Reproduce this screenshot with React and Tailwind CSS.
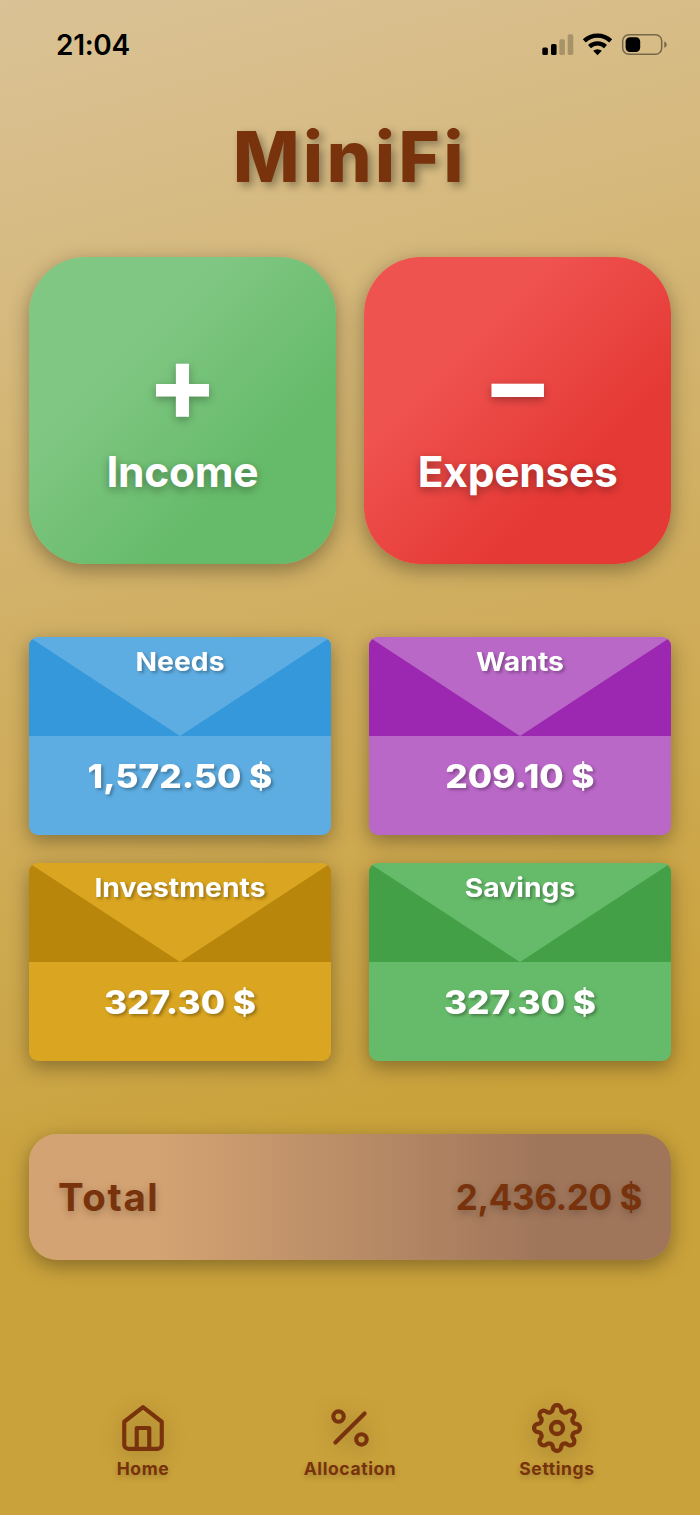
import React from 'react';
import { FiHome, FiPercent } from 'react-icons/fi';

const envelopes = [
  { name: 'Needs', amount: '1,572.50 $', body: 'bg-[#5dade2]', sides: 'bg-[#3498db]' },
  { name: 'Wants', amount: '209.10 $', body: 'bg-[#ba68c8]', sides: 'bg-[#9c27b0]' },
  { name: 'Investments', amount: '327.30 $', body: 'bg-[#daa520]', sides: 'bg-[#b8860b]' },
  { name: 'Savings', amount: '327.30 $', body: 'bg-[#66bb6a]', sides: 'bg-[#43a047]' },
];

// Rounded cog with eight lobes
const CogIcon = ({ className }) => (
  <svg className={className} viewBox="-25 -25 50 50" fill="none" stroke="currentColor" strokeWidth="4.3" strokeLinejoin="round">
    <circle r="6" />
    <path d="M-4.19-19.02A4.2 4.2 0 0 1 4.19-19.02A3.77 3.77 0 0 0 10.49-16.41A4.2 4.2 0 0 1 16.41-10.49A3.77 3.77 0 0 0 19.02-4.19A4.2 4.2 0 0 1 19.02 4.19A3.77 3.77 0 0 0 16.41 10.49A4.2 4.2 0 0 1 10.49 16.41A3.77 3.77 0 0 0 4.19 19.02A4.2 4.2 0 0 1-4.19 19.02A3.77 3.77 0 0 0-10.49 16.41A4.2 4.2 0 0 1-16.41 10.49A3.77 3.77 0 0 0-19.02 4.19A4.2 4.2 0 0 1-19.02-4.19A3.77 3.77 0 0 0-16.41-10.49A4.2 4.2 0 0 1-10.49-16.41A3.77 3.77 0 0 0-4.19-19.02z" />
  </svg>
);

const tabs = [
  { name: 'Home', icon: FiHome },
  { name: 'Allocation', icon: FiPercent },
  { name: 'Settings', icon: CogIcon },
];

const StatusBar = () => (
  <div className="flex h-[89px] items-center justify-between pl-[56px] pr-[33px] text-black">
    <span className="text-[28px] leading-none font-semibold tracking-[-0.3px]">21:04</span>
    <svg width="126" height="24" viewBox="0 0 126 24" fill="none">
      {/* signal */}
      <rect x="1.3" y="14.5" width="5.6" height="7.5" rx="1.6" fill="#000" />
      <rect x="10" y="11" width="5.6" height="11" rx="1.6" fill="#000" />
      <rect x="18.3" y="6.3" width="5.6" height="15.7" rx="1.6" fill="#000" fillOpacity="0.22" />
      <rect x="26.7" y="1.3" width="5.6" height="20.7" rx="1.6" fill="#000" fillOpacity="0.22" />
      {/* wifi */}
      <path d="M43.3 7.9a19 19 0 0 1 26.4 0" stroke="#000" strokeWidth="4.3" />
      <path d="M48.5 13.6a11.8 11.8 0 0 1 16 0" stroke="#000" strokeWidth="4.3" />
      <path d="M56.5 22.2l-4.3-4.4a6.4 6.4 0 0 1 8.6 0z" fill="#000" />
      {/* battery */}
      <rect x="81.7" y="1.7" width="39" height="19.6" rx="6.3" stroke="#000" strokeOpacity="0.45" strokeWidth="1.5" />
      <rect x="84.6" y="4.3" width="14.6" height="14.6" rx="4.3" fill="#000" />
      <path d="M123.3 8.4c1.5.6 2.4 1.8 2.4 3.2s-.9 2.6-2.4 3.2z" fill="#000" fillOpacity="0.45" />
    </svg>
  </div>
);

const ActionButton = ({ sign, label, colors }) => (
  <button
    className={`flex h-[306.5px] flex-col items-center rounded-[57px] pt-[79px] text-white shadow-[0_6px_20px_rgba(0,0,0,0.34)] ${colors}`}
  >
    <span className="text-[106px] leading-[94px] font-bold [text-shadow:0_3px_8px_rgba(0,0,0,0.3)]">{sign}</span>
    <span className="mt-[17px] text-[42.5px] leading-[50px] font-bold tracking-[-0.3px] [text-shadow:0_3px_8px_rgba(0,0,0,0.35)]">
      {label}
    </span>
  </button>
);

const Envelope = ({ name, amount, body, sides }) => (
  <div className={`h-[198px] overflow-hidden rounded-[9px] text-white shadow-[0_6px_20px_rgba(0,0,0,0.34)] ${body}`}>
    <div className="grid h-[99px]">
      {/* side folds, the flap shows through between them */}
      <div className={`col-start-1 row-start-1 [clip-path:polygon(0_0,50%_100%,100%_0,100%_100%,0_100%)] ${sides}`} />
      <div className="col-start-1 row-start-1 h-[41px] scale-x-[1.09] pt-[8.5px] text-center text-[26px] leading-[32px] font-bold [text-shadow:2px_2px_3px_rgba(0,0,0,0.3)]">
        {name}
      </div>
    </div>
    <div className="scale-x-[1.085] pt-[21px] text-center text-[32.5px] leading-[40px] font-extrabold [text-shadow:2px_2px_3px_rgba(0,0,0,0.3)]">
      {amount}
    </div>
  </div>
);

const App = () => {
  return (
    <div className="h-[1515px] w-[700px] overflow-hidden bg-[linear-gradient(165deg,#dac296_0%,#d1b065_38%,#caa23b_72%)] font-['Inter',sans-serif]">
      <StatusBar />

      <h1 className="mt-[22.5px] text-center text-[70.5px] leading-[90px] font-extrabold tracking-[3.6px] text-[#78330d] [text-shadow:4px_4px_8px_rgba(0,0,0,0.35)]">
        MiniFi
      </h1>

      <div className="mt-[55.5px] grid grid-cols-2 gap-[28.5px] px-[29px]">
        <ActionButton sign="+" label="Income" colors="bg-[linear-gradient(135deg,#81c784_30%,#66bb6a_70%)]" />
        <ActionButton sign="−" label="Expenses" colors="bg-[linear-gradient(135deg,#ef5350_30%,#e53935_70%)]" />
      </div>

      <div className="mt-[73.5px] grid grid-cols-2 gap-x-[38px] gap-y-[28px] px-[29px]">
        {envelopes.map((envelope) => (
          <Envelope key={envelope.name} {...envelope} />
        ))}
      </div>

      <div className="mx-[29px] mt-[73px] flex h-[126px] items-center justify-between rounded-[28px] bg-[linear-gradient(90deg,#d4a373_20%,#a0765b_80%)] px-[29px] text-[#78330d] shadow-[0_6px_20px_rgba(0,0,0,0.34)]">
        <span className="text-[38.5px] leading-none font-bold tracking-[1.6px] [text-shadow:0_3px_8px_rgba(0,0,0,0.25)]">Total</span>
        <span className="pt-px text-[35px] leading-none font-bold tracking-[-0.4px] [text-shadow:0_3px_8px_rgba(0,0,0,0.25)]">2,436.20 $</span>
      </div>

      <nav className="mt-[142.5px] grid grid-cols-3 px-[39.5px] text-[#78330d]">
        {tabs.map(({ name, icon: Icon }) => (
          <a key={name} className="flex flex-col items-center">
            <Icon className="size-[50px] drop-shadow-[0_4px_10px_rgba(0,0,0,0.25)]" />
            <span className="mt-[5px] text-[17.5px] leading-[22px] font-bold tracking-[0.6px] [text-shadow:0_3px_6px_rgba(0,0,0,0.2)]">
              {name}
            </span>
          </a>
        ))}
      </nav>
    </div>
  );
};

export default App;
